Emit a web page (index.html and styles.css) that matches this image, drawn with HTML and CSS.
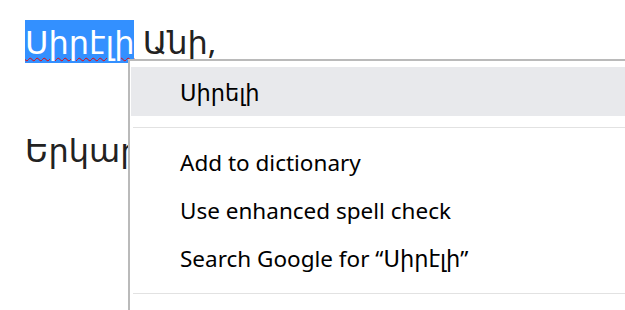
FILE: index.html
```html
<!DOCTYPE html>
<html>
<head>
<meta charset="utf-8">
<link rel="stylesheet" href="styles.css">
</head>
<body>
<div class="doc">
  <p class="line first"><span class="sel">Սիրէլի</span> Անի,</p>
  <p class="line second">Երկար</p>
</div>
<div class="menu">
  <div class="item hover">Սիրելի</div>
  <div class="sep"></div>
  <div class="item">Add to dictionary</div>
  <div class="item">Use enhanced spell check</div>
  <div class="item">Search Google for “Սիրէլի”</div>
  <div class="sep last"></div>
</div>
</body>
</html>
```
FILE: styles.css
```css
html, body {
  margin: 0;
  padding: 0;
  background: #fff;
  overflow: hidden;
  width: 625px;
  height: 310px;
}
.doc {
  padding: 23px 0 0 25px;
  font-family: "Noto Sans", "DejaVu Sans", sans-serif;
  font-size: 32px;
  color: #222;
}
.line {
  margin: 0;
  line-height: 37px;
  white-space: nowrap;
}
.second {
  margin-top: 71px;
}
.sel {
  background: #3390ff;
  color: #fff;
  text-decoration: underline wavy #e00;
  text-underline-offset: 3px;
  text-decoration-thickness: 1px;
}
.menu {
  position: absolute;
  left: 128px;
  top: 59px;
  right: -10px;
  bottom: -10px;
  background: #fff;
  border-top: 2px solid #bababa;
  border-left: 2px solid #bababa;
  padding-top: 6px;
  font-family: "Noto Sans", "DejaVu Sans", sans-serif;
  font-size: 22.5px;
  color: #000;
}
.item {
  height: 48px;
  line-height: 48px;
  padding-left: 49px;
  margin-left: 1px;
  white-space: nowrap;
}
.item.hover {
  height: 49px;
  line-height: 51px;
  background: #e8e9ec;
}
.sep {
  height: 1px;
  background: #e2e2e2;
  margin: 11px 0 11px 3px;
}
.sep.last {
  margin-top: 10px;
}
```
